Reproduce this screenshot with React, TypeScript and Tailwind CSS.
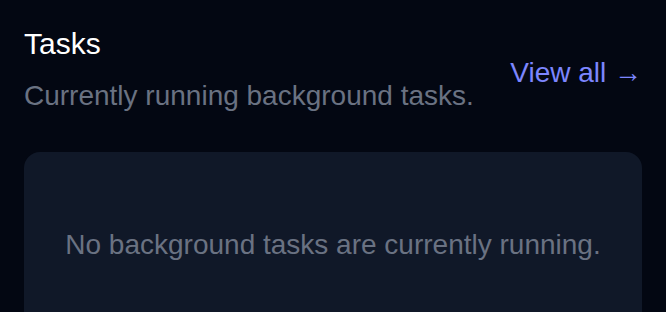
import React from 'react';

export default function App() {
  return (
    <div
      className="min-h-screen bg-[#030712] px-6 pt-6 text-[28px] leading-[40px]"
      style={{ fontFamily: '"Liberation Sans", Arial, sans-serif' }}
    >
      {/* Header */}
      <div className="flex items-center justify-between">
        <div>
          <h2 className="text-[30px] font-normal text-white">Tasks</h2>
          <p className="mt-3 text-gray-500">Currently running background tasks.</p>
        </div>
        <a href="#" className="mt-[5px] text-indigo-400">
          View all →
        </a>
      </div>

      {/* Empty state */}
      <div className="mt-9 rounded-2xl bg-gray-900 px-6 pb-[71px] pt-[73px] text-center text-gray-500">
        No background tasks are currently running.
      </div>
    </div>
  );
}
